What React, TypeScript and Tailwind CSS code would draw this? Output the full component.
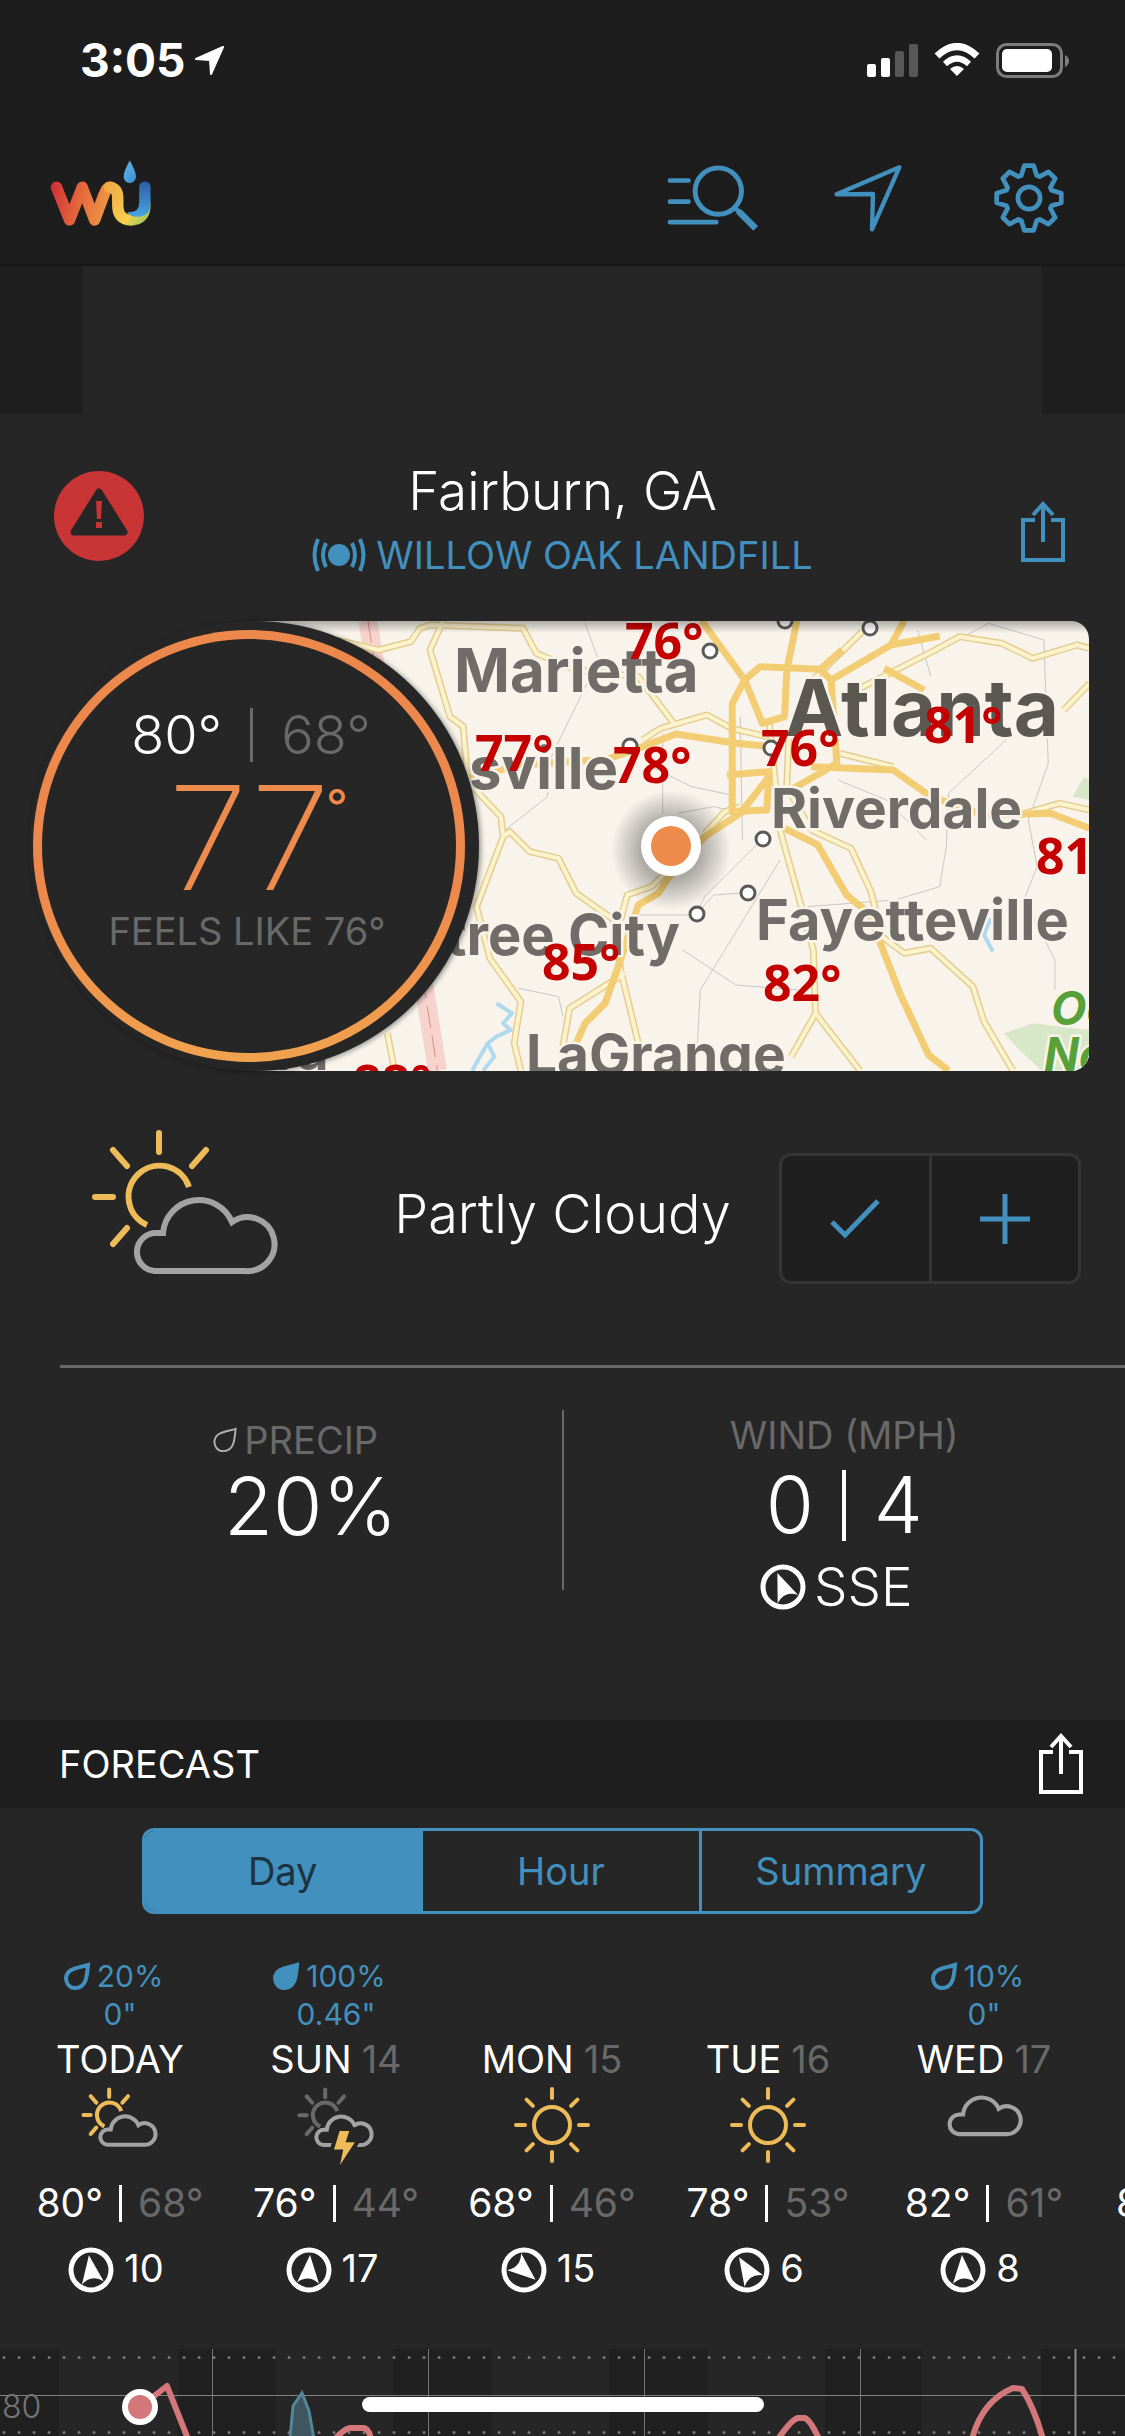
import { useState } from "react";

const BLUE = "#4290bd";
const SUN = "#edbb57";
const CLOUD = "#a3a3a3";
const DIM = "#696969";
const PANEL = "#262626";
const CLOUD_PATH = "M64 142A19 19 0 0 1 66 104H72A36 36 0 0 1 141 93A27 27 0 1 1 154 142Z";

function Logo() {
  return (
    <svg viewBox="30 20 304 206" className="h-[69px] w-[102px]" role="img" aria-label="WU">
      <defs>
        <linearGradient id="wuWarm" gradientUnits="userSpaceOnUse" x1="35" y1="110" x2="215" y2="150">
          <stop offset="0" stopColor="#cf3238" />
          <stop offset="0.5" stopColor="#e56a3c" />
          <stop offset="1" stopColor="#ee9a45" />
        </linearGradient>
        <linearGradient id="wuYellow" gradientUnits="userSpaceOnUse" x1="200" y1="100" x2="330" y2="215">
          <stop offset="0" stopColor="#f0a846" />
          <stop offset="0.65" stopColor="#f8cf4e" />
          <stop offset="0.88" stopColor="#a9c95a" />
          <stop offset="1" stopColor="#3fa9a0" />
        </linearGradient>
        <linearGradient id="wuBlue" x1="0" y1="0" x2="0" y2="1">
          <stop offset="0" stopColor="#2e5ea8" />
          <stop offset="1" stopColor="#46a5e0" />
        </linearGradient>
        <linearGradient id="wuDrop" x1="0" y1="0" x2="1" y2="1">
          <stop offset="0" stopColor="#62b9ea" />
          <stop offset="1" stopColor="#3b8dd0" />
        </linearGradient>
      </defs>
      <g fill="none" strokeWidth="34" strokeLinecap="round" strokeLinejoin="round">
        <path d="M49 107L88 205L126 107L163 205L190 132Q198 107 212 107" stroke="url(#wuWarm)" />
        <path d="M206 107Q232 108 232 140V160Q232 205 272 205Q313 204 313 160" stroke="url(#wuYellow)" />
      </g>
      <path d="M296 107a17 17 0 0 1 34 0v50q-1 32-30 38q-28 4-40-14q36 4 36-28z" fill="url(#wuBlue)" />
      <path d="M268 24q20 36 20 52a20 20 0 0 1-40 0q0-16 20-52z" fill="url(#wuDrop)" stroke="#1d1d1d" strokeWidth="3" />
    </svg>
  );
}

function ListSearchIcon() {
  return (
    <svg viewBox="46 42 278 204" className="h-[68px] w-[92px]" fill="none" stroke={BLUE} strokeLinecap="round" aria-hidden="true">
      <path d="M55 91H111M55 155H111M55 217H195" strokeWidth="14" />
      <circle cx="201" cy="123" r="70" strokeWidth="15" />
      <path d="M250 172L264 186" strokeWidth="14" />
      <path d="M262 184L314 236" strokeWidth="20" strokeLinecap="butt" />
    </svg>
  );
}

function NavigateIcon() {
  return (
    <svg viewBox="548 38 204 204" className="h-[68px] w-[68px]" fill="none" stroke={BLUE} strokeWidth="13" strokeLinejoin="round" aria-hidden="true">
      <path d="M744 48L556 129L665 128L662 234Z" />
    </svg>
  );
}

function GearIcon() {
  const tooth = [[-23, -67], [-14, -96], [14, -96], [23, -67]];
  const points = Array.from({ length: 8 }, (_, i) => {
    const a = (i * Math.PI) / 4;
    return tooth.map(([x, y]) => `${(x * Math.cos(a) - y * Math.sin(a)).toFixed(1)},${(x * Math.sin(a) + y * Math.cos(a)).toFixed(1)}`).join(" ");
  }).join(" ");
  return (
    <svg viewBox="-104 -104 208 208" className="h-[70px] w-[70px]" fill="none" stroke={BLUE} strokeWidth="14" strokeLinejoin="round" aria-hidden="true">
      <polygon points={points} />
      <circle r="33" />
    </svg>
  );
}

function ShareIcon({ color }: { color: string }) {
  return (
    <svg viewBox="0 0 44 62" className="h-[62px] w-[44px]" fill="none" stroke={color} strokeWidth="4" aria-hidden="true">
      <path d="M14 19H2V59H42V19H30M22 41V5M12 14L22 3L32 14" />
    </svg>
  );
}

function StationIcon() {
  return (
    <svg viewBox="0 0 54 34" className="h-[34px] w-[54px]" fill="none" stroke={BLUE} strokeWidth="4" aria-hidden="true">
      <circle cx="27" cy="17" r="11" fill={BLUE} stroke="none" />
      <path d="M14 5Q8 17 14 29M6 1Q-1 17 6 33M40 5Q46 17 40 29M48 1Q55 17 48 33" />
    </svg>
  );
}

function DropIcon({ filled, color, stroke, className }: { filled?: boolean; color: string; stroke: number; className: string }) {
  return (
    <svg viewBox="-1 -1 28 29" className={className} fill={filled ? color : "none"} stroke={color} strokeWidth={stroke} aria-hidden="true">
      <path d="M24 2C23 14 22 25 11 25C5 25 2 20 2 15C3 5 14 5 24 2Z" />
    </svg>
  );
}

function WindIcon({ angle }: { angle: number }) {
  return (
    <svg viewBox="-23 -23 46 46" className="h-[46px] w-[46px] shrink-0" aria-hidden="true">
      <circle r="20" fill="none" stroke="#fff" strokeWidth="5" />
      <path d="M0 -15L11 13Q0 4 -11 13Z" fill="#fff" transform={`rotate(${angle})`} />
    </svg>
  );
}

function SunAndCloud({ className, stroke, sun = SUN, bolt }: { className: string; stroke: number; sun?: string; bolt?: boolean }) {
  return (
    <svg viewBox={bolt ? "-2 -2 194 196" : "-2 -2 194 152"} className={className} fill="none" strokeWidth={stroke} aria-hidden="true">
      <g stroke={sun} strokeLinecap="round">
        <path d="M98 58A31 31 0 1 0 56 96" strokeLinecap="butt" />
        <path d="M68 4V23M115 21L101 37M22 21L36 37M4 68H22M36 99L22 115" />
      </g>
      <path d={CLOUD_PATH} stroke={CLOUD} />
      {bolt && <path d="M104 107H128L119 135H142L105 192L113 153H90Z" fill={SUN} stroke={PANEL} strokeWidth="20" paintOrder="stroke" />}
    </svg>
  );
}

function SunIcon() {
  return (
    <svg viewBox="-39 -39 78 78" className="mt-[3px] h-[78px] w-[78px]" fill="none" stroke={SUN} strokeWidth="4" strokeLinecap="round" aria-hidden="true">
      <circle r="18" />
      {[0, 45, 90, 135, 180, 225, 270, 315].map((a) => (
        <path key={a} d="M0 -27V-36" transform={`rotate(${a})`} />
      ))}
    </svg>
  );
}

function CloudIcon() {
  return (
    <svg viewBox="39 61 149 88" className="mt-[9px] h-[46px] w-[77px]" fill="none" stroke={CLOUD} strokeWidth="8" aria-hidden="true">
      <path d={CLOUD_PATH} />
    </svg>
  );
}

const HIGHWAYS = [
  "613,62 710,240 750,370 800,350 805,210 828,62",
  "710,240 745,200 880,208 905,240 918,490 880,520 820,565",
  "880,208 930,150",
  "905,240 1040,135 1150,108",
  "1040,135 1070,62",
  "710,240 682,310 682,635 760,630 765,515 670,525",
  "90,535 200,495 400,478 480,440 555,402 690,430 770,440",
  "860,500 1045,510 1130,590 1250,645 1400,640 1488,685",
  "765,530 700,640 620,710 540,830 515,880 470,915 430,1080 395,1210 350,1270 330,1330",
  "800,685 875,735 940,885 990,940 1060,1180 1125,1365 1170,1412",
  "1025,205 1115,270",
];
const ROADS = [
  "-212,120 -116,150 -43,125 -23,85 0,75 210,85 240,160 330,210 470,230 550,370",
  "30,62 0,150 45,350 75,380 85,545 160,650 165,710 105,920 135,1075 205,1205 190,1330 205,1412",
  "165,710 180,695 225,755 290,775 330,880 415,960 430,1110 470,1330",
  "480,420 520,385 625,345 680,385 760,410",
  "440,1120 315,1225 300,1340",
  "790,690 865,1050 870,1240 815,1370",
  "870,1240 970,1412",
  "860,690 950,745 995,875 1020,1010 1070,1060 1130,1045 1225,1160 1250,1265 1315,1412",
  "860,245 975,95",
  "970,265 1140,150 1195,110 1290,130 1360,175 1460,135 1488,145",
  "925,460 1045,500",
  "765,360 780,560 790,690",
  "810,400 805,560 860,690",
  "1330,645 1420,610 1488,630",
  "1430,330 1488,250",
  "430,960 445,885 500,860 530,820",
  "620,700 665,635 700,620",
  "-96,1300 -80,1412",
];
const LANES = [
  "350,70 380,180 270,480 265,590 170,690",
  "500,500 590,560 680,585",
  "525,400 525,640",
  "740,730 620,890 600,940",
  "1100,90 1130,230",
  "1190,120 1260,70 1385,120 1395,490 1350,660 1370,800 1340,900 1410,1080 1410,1170",
  "1300,420 1170,580 1165,740 1150,860 1050,900 850,920",
  "570,1050 690,1155 830,1170",
  "790,780 610,1170 600,1412",
  "200,1165 290,1190 300,1250",
  "560,640 640,620 700,640",
  "700,350 705,720",
  "920,540 1030,600 1120,720",
  "470,945 600,945 640,885 715,878",
];
const TOWNS = [[456, 30], [531, 0], [616, 7], [376, 125], [517, 127], [509, 218], [494, 272], [443, 293]];
const PLACES: [string, number, number, string][] = [
  ["Marietta", 200, 71, "text-[60px]"],
  ["sville", 215, 168, "text-[58px]"],
  ["Riverdale", 517, 207, "text-[55px]"],
  ["Fayetteville", 502, 319, "text-[56px]"],
  ["tree City", 192, 334, "text-[56px]"],
  ["LaGrange", 272, 453, "text-[55px]"],
  ["ra", 22, 449, "text-[54px]"],
];
const READINGS: [string, number, number][] = [
  ["76°", 371, 38], ["77°", 221, 150], ["78°", 359, 162], ["76°", 507, 145], ["81°", 670, 122],
  ["81°", 782, 253], ["85°", 288, 359], ["82°", 509, 380], ["88°", 99, 480],
];

function StationMap() {
  return (
    <svg viewBox="0 0 835 450" preserveAspectRatio="xMinYMid slice" className="block h-full w-full" role="img" aria-label="Map of stations around Fairburn">
      <defs>
        <linearGradient id="mapShade" x1="0" y1="0" x2="0" y2="1">
          <stop offset="0" stopColor="#000" stopOpacity="0.3" />
          <stop offset="1" stopColor="#000" stopOpacity="0" />
        </linearGradient>
        <radialGradient id="pinShade">
          <stop offset="0.5" stopColor="#000" stopOpacity="0.3" />
          <stop offset="1" stopColor="#000" stopOpacity="0" />
        </radialGradient>
      </defs>
      <rect width="835" height="450" fill="#f8f4ec" />
      <g transform="translate(176 -21) scale(0.4432 0.3333)" fill="none" strokeLinejoin="round">
        <path d="M1295 1300L1360 1270L1488 1290V1412H1380L1330 1350ZM1450 590L1475 530L1488 540V600Z" fill="#d7e7c8" />
        <polyline points="-140,62 -11,1180 17,1412" stroke="#f7d3ce" strokeWidth="19" vectorEffect="non-scaling-stroke" />
        <polyline points="-140,62 -11,1180 17,1412" stroke="#d98b8b" strokeWidth="1" strokeDasharray="22 8" vectorEffect="non-scaling-stroke" />
        <g stroke="#aed9ee" strokeWidth="4">
          <polyline points="150,1210 185,1240 165,1270 182,1290 150,1310 130,1330 145,1370 120,1412" vectorEffect="non-scaling-stroke" />
          <polyline points="130,1330 95,1412" vectorEffect="non-scaling-stroke" />
          <polyline points="1265,955 1250,1005 1270,1055" vectorEffect="non-scaling-stroke" />
        </g>
        {LANES.map((p) => <polyline key={p} points={p} stroke="#c9c7c4" strokeWidth="1" vectorEffect="non-scaling-stroke" />)}
        {ROADS.map((p) => <polyline key={p} points={p} stroke="#e5cd92" strokeWidth="7" vectorEffect="non-scaling-stroke" />)}
        {ROADS.map((p) => <polyline key={p} points={p} stroke="#fdf3cc" strokeWidth="4" vectorEffect="non-scaling-stroke" />)}
        {HIGHWAYS.map((p) => <polyline key={p} points={p} stroke="#f3cd73" strokeWidth="7" vectorEffect="non-scaling-stroke" />)}
      </g>
      {TOWNS.map(([x, y]) => <circle key={`${x}-${y}`} cx={x} cy={y} r="7" fill="#fff" stroke="#5c5a57" strokeWidth="3" />)}
      <g className="font-bold" fill="#706c67" stroke="#f8f4ec" strokeWidth="5" strokeLinejoin="round" paintOrder="stroke">
        {PLACES.map(([name, x, y, size]) => <text key={name} x={x} y={y} className={size}>{name}</text>)}
        <text x="531" y="115" fill="#5b5852" className="text-[78px]">Atlanta</text>
        <text x="797" y="404" fill="#57a03a" className="text-[46px] italic">Oc</text>
        <text x="790" y="450" fill="#57a03a" className="text-[46px] italic">Na</text>
      </g>
      <g className="font-['Noto_Sans',sans-serif] text-[50px] font-bold" fill="#c40000">
        {READINGS.map(([t, x, y]) => <text key={`${x}-${y}`} x={x} y={y}>{t}</text>)}
      </g>
      <circle cx="417" cy="229" r="60" fill="url(#pinShade)" />
      <circle cx="417" cy="225" r="30" fill="#fff" />
      <circle cx="417" cy="225" r="20" fill="#ed8b4c" />
      <rect width="835" height="12" fill="url(#mapShade)" />
    </svg>
  );
}

type Day = {
  name: string;
  date?: string;
  chance?: string;
  amount?: string;
  soaked?: boolean;
  icon?: React.ReactNode;
  high: string;
  low: string;
  wind?: string;
  angle: number;
};

const DAYS: Day[] = [
  { name: "TODAY", chance: "20%", amount: '0"', icon: <SunAndCloud className="mt-1 h-[61px] w-[78px]" stroke={10} />, high: "80°", low: "68°", wind: "10", angle: -8 },
  { name: "SUN", date: "14", chance: "100%", amount: '0.46"', soaked: true, icon: <SunAndCloud className="mt-1 h-[79px] w-[78px]" stroke={10} sun={DIM} bolt />, high: "76°", low: "44°", wind: "17", angle: 4 },
  { name: "MON", date: "15", icon: <SunIcon />, high: "68°", low: "46°", wind: "15", angle: 130 },
  { name: "TUE", date: "16", icon: <SunIcon />, high: "78°", low: "53°", wind: "6", angle: -32 },
  { name: "WED", date: "17", chance: "10%", amount: '0"', icon: <CloudIcon />, high: "82°", low: "61°", wind: "8", angle: -4 },
];

function DayColumn({ day }: { day: Day }) {
  return (
    <li className="flex w-[216px] shrink-0 flex-col items-center">
      <div className="flex h-[34px] items-center gap-[6px] pr-[14px] text-[30px] leading-[34px] text-[#4290bd]">
        {day.chance && <DropIcon filled={day.soaked} color={BLUE} stroke={4} className="h-[29px] w-[28px]" />}
        {day.chance}
      </div>
      <div className="mt-1 h-[34px] text-[30px] leading-[34px] text-[#4290bd]">{day.amount}</div>
      <div className="mt-1 flex gap-[10px] text-[38px] leading-[48px]">
        {day.name}
        {day.date && <span className="text-[#696969]">{day.date}</span>}
      </div>
      <div className="flex h-[84px] items-start justify-center">{day.icon}</div>
      <div className="mt-3 flex items-center gap-4 text-[39px] leading-[48px]">
        <span>{day.high}</span>
        <span className="h-[37px] w-[3px] bg-white" />
        <span className="text-[#696969]">{day.low}</span>
      </div>
      <div className="mt-5 flex h-[46px] gap-[10px] pr-2 text-[38px] leading-[42px]">
        <WindIcon angle={day.angle} />
        {day.wind}
      </div>
    </li>
  );
}

function TemperatureChart() {
  return (
    <svg viewBox="0 0 1125 87" preserveAspectRatio="xMinYMin slice" className="block h-[87px] w-full" role="img" aria-label="Temperature and precipitation chart">
      {[[0, 59], [178, 98], [393, 99], [609, 99], [825, 97], [1041, 84]].map(([x, w]) => (
        <rect key={x} x={x} width={w} height="87" fill="#202020" />
      ))}
      <path d="M0 8.500H1125M0 83.500H1125" stroke="#777" strokeWidth="3" strokeDasharray="0.1 14.9" strokeDashoffset="-4" strokeLinecap="round" />
      <path d="M212.500 0V87M428.500 0V87M644.500 0V87M860.500 0V87" stroke="#757575" />
      <path d="M1075.500 0V87" stroke="#8c8c8c" strokeWidth="2" />
      <path d="M0 46.500H1125" stroke="#808080" />
      <path d="M290 90L293 57L302 44L309 62L314 90" fill="#3d5660" stroke="#56869a" strokeWidth="3" />
      <g fill="none" stroke="#d4777a" strokeWidth="6" strokeLinejoin="round">
        <path d="M140 58L167 37L188 90" />
        <path d="M335 90Q344 80 350 79H364Q369 80 371 90" />
        <path d="M778 90Q792 70 798 69H805Q811 72 819 90" />
        <path d="M972 90Q982 52 1013 39L1022 40Q1034 58 1043 90" />
      </g>
      <text x="2" y="69" fill="#757575" className="text-[32px] font-light">80</text>
      <circle cx="140" cy="58" r="15" fill="#d4777a" stroke="#fff" strokeWidth="6" />
    </svg>
  );
}

export default function App() {
  const [view, setView] = useState("Day");
  return (
    <div className="min-h-screen w-full overflow-hidden bg-[#262626] font-['Inter',sans-serif] text-white">
      <header className="border-b-2 border-[#171717] bg-[#1d1d1d]">
        <div className="flex h-[120px] items-center justify-between pr-[55px] pl-20">
          <div className="flex items-center gap-[10px]">
            <span className="text-[46px] leading-[48px] font-bold">3:05</span>
            <svg viewBox="0 0 30 30" className="h-[30px] w-[30px]" fill="#fff" stroke="#fff" strokeWidth="2" strokeLinejoin="round" aria-hidden="true">
              <path d="M28 2L1 14L15 15L16 29Z" />
            </svg>
          </div>
          <div className="flex items-center gap-4">
            <svg viewBox="0 0 51 33" className="h-[33px] w-[51px]" aria-label="Signal">
              <rect y="20" width="9" height="13" rx="2" fill="#fff" />
              <rect x="14" y="14" width="9" height="19" rx="2" fill="#fff" />
              <rect x="28" y="7" width="9" height="26" rx="2" fill="#575757" />
              <rect x="42" width="9" height="33" rx="2" fill="#575757" />
            </svg>
            <svg viewBox="0 0 46 34" className="h-[34px] w-[46px]" fill="none" stroke="#fff" strokeWidth="7" aria-label="Wi-Fi">
              <path d="M3 13Q23 -6 43 13" />
              <path d="M11 21Q23 10 35 21" strokeWidth="6" />
              <path d="M16 26Q23 20 30 26L23 33Z" fill="#fff" stroke="none" />
            </svg>
            <svg viewBox="0 0 74 35" className="h-[35px] w-[74px]" aria-label="Battery">
              <rect x="1.500" y="1.500" width="64" height="32" rx="9" fill="none" stroke="#7d7d7d" strokeWidth="3" />
              <rect x="6" y="6" width="50" height="23" rx="5" fill="#fff" />
              <path d="M69 12q4 2 4 6t-4 6z" fill="#7d7d7d" />
            </svg>
          </div>
        </div>
        <nav className="flex h-[144px] items-center pt-3 pr-[61px] pl-[50px]">
          <a href="#home" className="-mt-3 mr-auto"><Logo /></a>
          <button aria-label="Search locations" className="mr-[75px]"><ListSearchIcon /></button>
          <button aria-label="Use my location" className="mr-[92px]"><NavigateIcon /></button>
          <button aria-label="Settings"><GearIcon /></button>
        </nav>
      </header>

      <div className="h-[148px] border-x-[83px] border-[#1f1f1f] bg-[#262626]" />

      <main>
        <section className="grid grid-cols-[1fr_auto_1fr] items-start px-[60px] pt-[45px] pb-[34px]">
          <button aria-label="Weather alerts" className="mt-3 -ml-[6px] justify-self-start">
            <svg viewBox="0 0 90 90" className="h-[90px] w-[90px]" aria-hidden="true">
              <circle cx="45" cy="45" r="45" fill="#c93434" />
              <path d="M45 21L70 61H20Z" fill={PANEL} stroke={PANEL} strokeWidth="7" strokeLinejoin="round" />
              <path d="M42 30H48L47 48H43ZM42 51H48V57H42Z" fill="#c93434" />
            </svg>
          </button>
          <div className="text-center">
            <h1 className="text-[53px] leading-[64px] font-[350]">Fairburn, GA</h1>
            <a href="#station" className="flex items-center gap-[10px] text-[38px] leading-[64px] text-[#4290bd]">
              <StationIcon />
              WILLOW OAK LANDFILL
            </a>
          </div>
          <button aria-label="Share conditions" className="mt-[42px] justify-self-end"><ShareIcon color={BLUE} /></button>
        </section>

        <section className="relative">
          <div className="mr-9 ml-[254px] h-[450px] overflow-hidden rounded-r-[18px]">
            <StationMap />
          </div>
          <div className="absolute top-0 left-[29px] h-[450px] w-[450px] rounded-full bg-[#262626] pt-[9px] pl-1 shadow-[2px_1px_5px_rgba(0,0,0,0.4)]">
            <div className="h-[432px] w-[432px] rounded-full bg-gradient-to-b from-[#ed884c] from-60% to-[#f0a24e] p-[9px]">
              <div className="flex h-full flex-col items-center rounded-full bg-[#262626] pt-[64px]">
                <div className="flex items-center gap-7 pl-1 text-[54px] leading-[64px] font-[350]">
                  <span>80°</span>
                  <span className="h-[54px] w-[3px] bg-[#696969]" />
                  <span className="text-[#696969]">68°</span>
                </div>
                <div className="relative mt-4 text-[144px] leading-[110px] font-extralight text-[#ed8b4c]">
                  77
                  <span className="absolute top-0 left-full -ml-1 text-[48px] leading-[48px] font-normal">°</span>
                </div>
                <div className="mt-[14px] pr-1 text-[38px] leading-[48px] text-[#696969]">FEELS LIKE 76°</div>
              </div>
            </div>
          </div>
        </section>

        <section className="grid h-[294px] grid-cols-[1fr_auto_1fr] items-start px-[44px]">
          <SunAndCloud className="mt-[56px] ml-[45px] h-[152px] w-[194px]" stroke={6} />
          <h2 className="mt-[111px] text-[54px] leading-[64px] font-[350]">Partly Cloudy</h2>
          <div className="mt-[82px] flex h-[131px] w-[302px] justify-self-end rounded-[12px] border-[3px] border-[#353535] bg-[#1f1f1f]">
            <button aria-label="Confirm conditions" className="flex flex-1 items-center justify-center border-r-[3px] border-[#353535]">
              <svg viewBox="0 0 50 40" className="h-[40px] w-[50px]" fill="none" stroke={BLUE} strokeWidth="5" aria-hidden="true">
                <path d="M2 23L15 36L48 2" />
              </svg>
            </button>
            <button aria-label="Report conditions" className="flex flex-1 items-center justify-center">
              <svg viewBox="0 0 50 50" className="h-[50px] w-[50px]" stroke={BLUE} strokeWidth="5" aria-hidden="true">
                <path d="M0 25H50M25 0V50" />
              </svg>
            </button>
          </div>
        </section>

        <section>
          <div className="ml-[60px] h-[3px] bg-[#696969]" />
          <div className="grid h-[352px] grid-cols-[1fr_2px_1fr] items-start">
            <div className="flex flex-col items-center pt-12 pl-[60px]">
              <div className="flex items-center gap-[5px] pr-8 text-[38px] leading-[48px] text-[#696969]">
                <DropIcon color="#b0b0b0" stroke={2} className="h-[28px] w-[28px]" />
                PRECIP
              </div>
              <div className="text-[80px] leading-[84px] font-light">20%</div>
            </div>
            <div className="mt-[42px] h-[180px] bg-[#696969]" />
            <div className="flex flex-col items-center pt-[43px]">
              <div className="text-[38px] leading-[48px] text-[#696969]">WIND (MPH)</div>
              <div className="mt-1 flex items-center gap-7 text-[78px] leading-[84px] font-light">
                <span>0</span>
                <span className="h-[71px] w-[4px] bg-white" />
                <span>4</span>
              </div>
              <div className="mt-2 flex items-center gap-2 pr-4 text-[53px] leading-[64px] font-[350]">
                <WindIcon angle={-22} />
                SSE
              </div>
            </div>
          </div>
        </section>

        <section>
          <div className="flex h-[88px] items-center justify-between bg-[#1e1e1e] pr-[42px] pl-[59px]">
            <h2 className="text-[38px] leading-[48px]">FORECAST</h2>
            <button aria-label="Share forecast"><ShareIcon color="#ffffff" /></button>
          </div>
          <div className="mx-[142px] mt-5 grid h-[86px] grid-cols-3 overflow-hidden rounded-[12px] border-[3px] border-[#4290bd]">
            {["Day", "Hour", "Summary"].map((label) => (
              <button
                key={label}
                aria-pressed={view === label}
                onClick={() => setView(label)}
                className={
                  "border-[#4290bd] text-[38px] leading-[48px] not-last:border-r-[3px] " +
                  (view === label ? "bg-[#4290bd] text-[#1d3342]" : "text-[#4290bd]")
                }
              >
                {label}
              </button>
            ))}
          </div>
          <ul className="mt-[45px] flex overflow-hidden pl-3">
            {DAYS.map((day) => <DayColumn key={day.name} day={day} />)}
            <li className="shrink-0 pt-[220px] pl-6 text-[39px] leading-[48px]">8</li>
          </ul>
          <div className="relative mt-[56px]">
            <TemperatureChart />
            <div className="absolute bottom-6 left-1/2 h-[15px] w-[402px] -translate-x-1/2 rounded-full bg-white" />
          </div>
        </section>
      </main>
    </div>
  );
}
